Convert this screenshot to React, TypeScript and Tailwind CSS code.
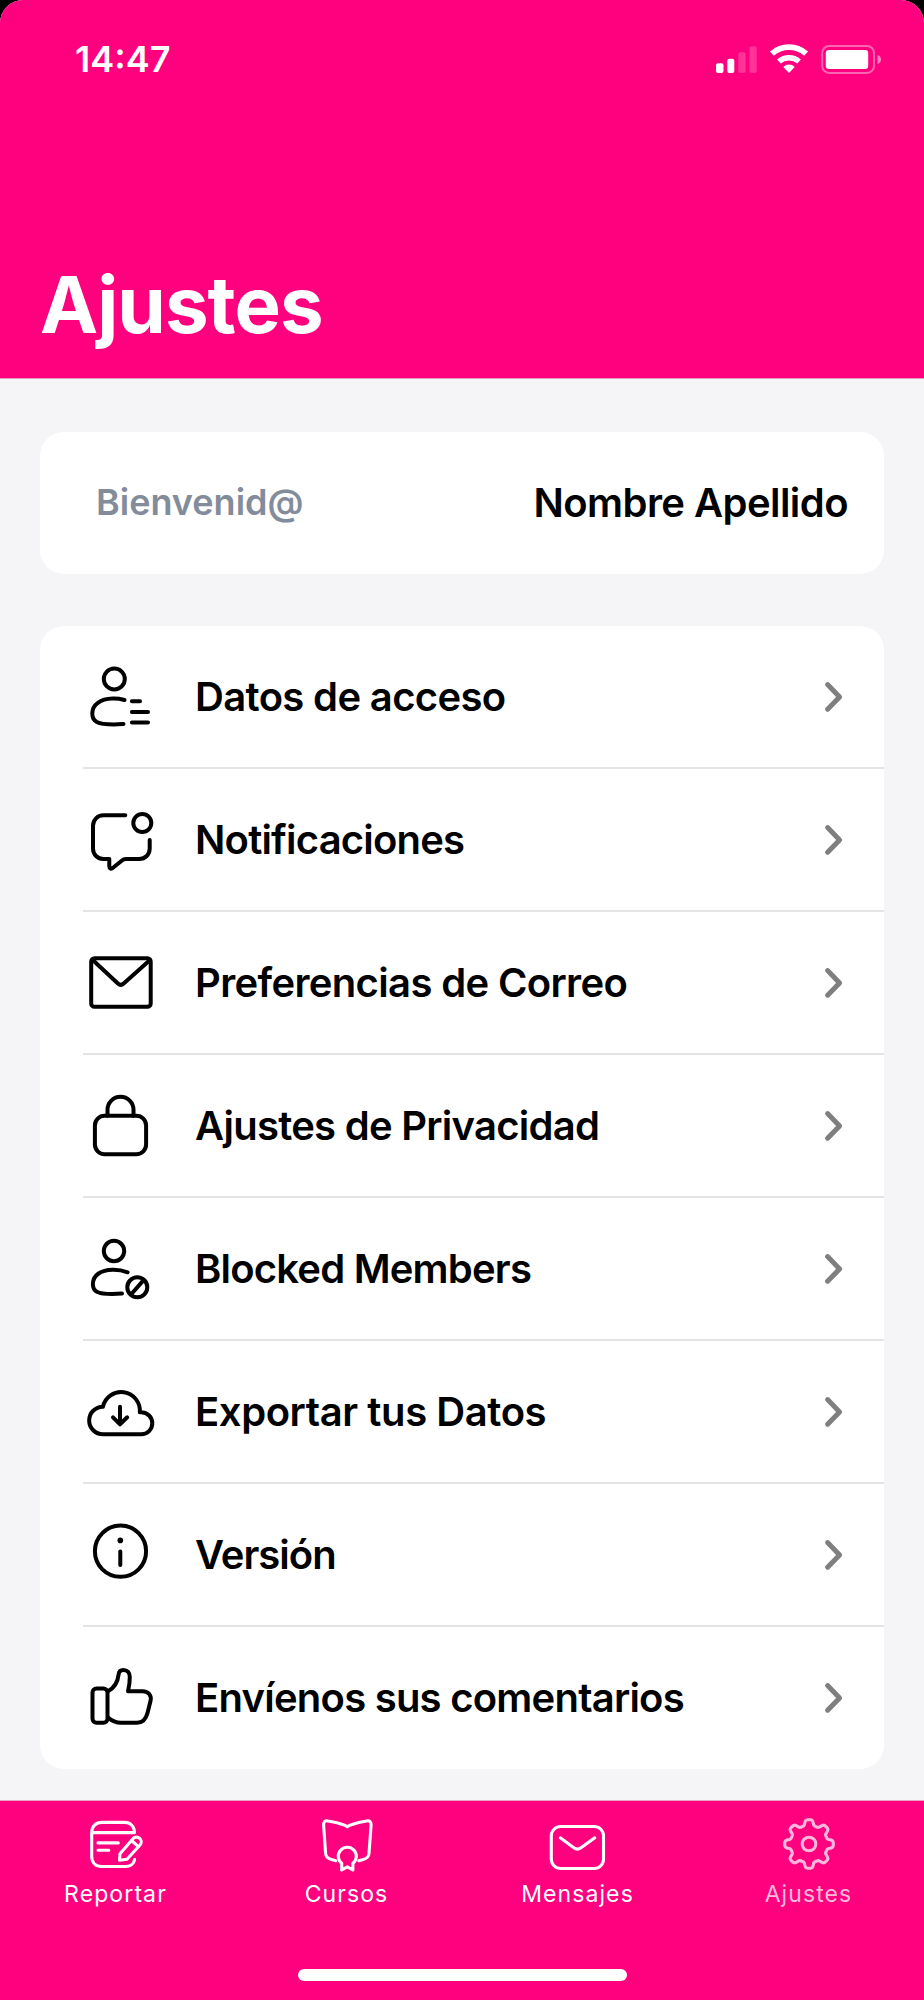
import type { ReactNode } from "react";

type Row = { label: string; tracking: string; icon: ReactNode };
type Tab = { label: string; active?: boolean; icon: ReactNode };

// Row icons are drawn in a box as high as the row itself
const rows: Row[] = [
  {
    label: "Datos de acceso",
    tracking: "tracking-[-0.65px]",
    icon: (
      <>
        <circle cx="31.3" cy="53" r="10.5" />
        <path d="M41.5 74C37 72.8 33 72.5 29.5 72.6C17.5 73 9.3 78.5 9.3 87.6C9.3 95.5 14 98.4 31 98.4C35 98.4 38 98.1 40.5 97.9" />
        <path d="M48.9 75.3H57M48.9 86H65M48.9 96.4H65" />
      </>
    ),
  },
  {
    label: "Notificaciones",
    tracking: "tracking-[-0.8px]",
    icon: (
      <>
        <path d="M42.3 46.3H20.5C14.5 46.3 10 50.8 10 56.8V79.5C10 85.5 14.5 90 20.5 90H26.3V97.3C26.3 99.8 28.3 100.3 30 98.8L39.3 91.3C40.3 90.4 41.3 90 42.8 90H56.2C62.2 90 66.7 85.5 66.7 79.5V71" />
        <circle cx="59.3" cy="54" r="9" />
      </>
    ),
  },
  {
    label: "Preferencias de Correo",
    tracking: "tracking-[-0.65px]",
    icon: (
      <>
        <rect x="8.2" y="46.2" width="59.5" height="48.6" rx="3.3" />
        <path d="M9.7 48L34.9 71.5C36.8 73.3 38.8 73.3 40.7 71.5L67 48" />
      </>
    ),
  },
  {
    label: "Ajustes de Privacidad",
    tracking: "tracking-[-0.72px]",
    icon: (
      <>
        <rect x="11.9" y="60.8" width="51.2" height="38.4" rx="9.6" />
        <path d="M24.5 60.8V54.8A13 13 0 0 1 50.5 54.8V60.8" />
      </>
    ),
  },
  {
    label: "Blocked Members",
    tracking: "tracking-[-0.8px]",
    icon: (
      <>
        <circle cx="31" cy="53" r="10.2" />
        <path d="M44.6 74.3C39.5 72.4 34.5 71.7 29.7 71.8C17.5 72.1 9.9 77.3 9.9 86C9.9 93.3 14 96 29 96C33 96 36.5 95.8 39 95.6" />
        <circle cx="54.3" cy="89.3" r="10" />
        <path d="M48.2 96.2L60.4 82.4" />
      </>
    ),
  },
  {
    label: "Exportar tus Datos",
    tracking: "tracking-[-0.42px]",
    icon: (
      <>
        <path d="M20 93.3A13.8 13.8 0 0 1 19.9 65.7A18.7 18.7 0 0 1 56.8 71.3H58.3A11 11 0 0 1 58.3 93.3Z" />
        <path d="M37 65.7V83.3M30 76.3L37 83.3L44.2 76.3" />
      </>
    ),
  },
  {
    label: "Versión",
    tracking: "tracking-[-1px]",
    icon: (
      <>
        <circle cx="37.5" cy="67.2" r="25.6" />
        <circle cx="37.3" cy="56.4" r="2.8" fill="#000" stroke="none" />
        <path d="M37.3 67.5V81" />
      </>
    ),
  },
  {
    label: "Envíenos sus comentarios",
    tracking: "tracking-[-0.76px]",
    icon: (
      <>
        <rect x="9.5" y="60.5" width="15" height="34.3" rx="4" />
        <path d="M25 63.3C31 60 34.8 54 35.6 46.5C35.9 43.5 37.3 41.9 40.3 41.9C44.5 41.9 46.8 44.8 46.8 49C46.8 54 46.2 58.5 45 63.2H59.5C65.5 63.2 68.8 67.5 67.5 73L64.5 85C62.8 91.5 60 94.8 54 94.8H38C32.5 94.8 29 93 25 89.5" />
      </>
    ),
  },
];

// Eight rounded teeth around (31, 30)
const gearPath =
  Array.from({ length: 192 }, (_, i) => {
    const a = (i / 192) * Math.PI * 2;
    const r = 21.5 + 2.8 * (Math.tanh(2.2 * Math.cos(8 * a)) / Math.tanh(2.2));
    return `${i === 0 ? "M" : "L"}${(31 + r * Math.cos(a)).toFixed(2)} ${(30 + r * Math.sin(a)).toFixed(2)}`;
  }).join("") + "Z";

const tabs: Tab[] = [
  {
    label: "Reportar",
    icon: (
      <>
        <path d="M49.5 18.6H6.7M49.5 18.6C49.5 12.5 45.5 8.4 39.5 8.4H17C10.8 8.4 6.7 12.5 6.7 18.6V42.5C6.7 48.6 10.8 52.5 17 52.5H40.5C45.5 52.5 49 49.8 49.6 45.5" />
        <path d="M13 28.9H33.3M13 36.3H23.8" />
        <path d="M34.5 46.3L35 39.7L48 24.7A4.7 4.7 0 0 1 55 31L42 45.2Z" />
        <path d="M46.6 26.5L53.3 32.6" />
      </>
    ),
  },
  {
    label: "Cursos",
    icon: (
      <>
        <path d="M19.8 46.7L15.5 45.5C11.5 44.5 9.8 43 9.6 39.5L7.6 11C7.4 7.8 9 6.3 12 7L16 7.8C22 9 27 10.3 31.3 12.6C35.6 10.3 40.6 9 46.6 7.8L50.6 7C53.6 6.3 55.3 7.8 55.1 11L53 39.5C52.8 43 51.1 44.5 47.1 45.5L42.8 46.7" />
        <path d="M25.7 56V49.3A9 9 0 1 1 36.9 49.3V56L31.3 52.8Z" />
      </>
    ),
  },
  {
    label: "Mensajes",
    icon: (
      <>
        <rect x="4.3" y="12.5" width="52.2" height="42" rx="9.3" />
        <path d="M13.3 23.8L26.8 33.7C29.3 35.6 31.5 35.6 34 33.7L47.8 23.8" />
      </>
    ),
  },
  {
    label: "Ajustes",
    active: true,
    icon: (
      <>
        <path d={gearPath} />
        <circle cx="31" cy="30" r="6.8" />
      </>
    ),
  },
];

function StatusIcons() {
  return (
    <svg width="166" height="30" viewBox="0 0 166 30" fill="#fff">
      <rect x="0" y="19.3" width="7.5" height="9.7" rx="2" />
      <rect x="11.3" y="14.7" width="7" height="14.3" rx="2" />
      <rect x="22.3" y="8.3" width="7.3" height="20.7" rx="2" opacity="0.2" />
      <rect x="33.3" y="2.3" width="7.5" height="26.7" rx="2" opacity="0.2" />
      <g transform="translate(53.3 0)">
        <path d="M2.6 9.7A25.8 25.8 0 0 1 36.8 9.7" fill="none" stroke="#fff" strokeWidth="5.8" />
        <path d="M9.6 17.5A15.3 15.3 0 0 1 29.8 17.5" fill="none" stroke="#fff" strokeWidth="5.5" />
        <path d="M19.7 29L14 22.9A8.2 8.2 0 0 1 25.4 22.9Z" />
      </g>
      <rect x="106.2" y="1.9" width="51.8" height="27" rx="7" fill="none" stroke="#fff" strokeOpacity="0.4" strokeWidth="2" />
      <rect x="109.8" y="6" width="42.4" height="19" rx="3" />
      <path d="M161.5 11C164 11.6 165 13.6 165 15.5C165 17.4 164 19.4 161.5 20Z" opacity="0.5" />
    </svg>
  );
}

function Chevron() {
  return (
    <svg className="mr-10 ml-auto" width="20" height="32" viewBox="0 0 20 32" fill="none" stroke="#7f7f7f" strokeWidth="5" strokeLinecap="round" strokeLinejoin="round">
      <path d="M3.6 3.6L15.6 15.9L3.6 28.2" />
    </svg>
  );
}

export default function App() {
  return (
    <div className="h-[2000px] w-[924px] overflow-hidden bg-black font-['Inter',sans-serif]">
      <div className="flex h-full flex-col overflow-hidden rounded-t-[23px] bg-[#f5f5f8] text-black">
        <header className="h-[379px] shrink-0 border-b border-[#e49abf] bg-[#ff007f] text-white">
          <div className="flex h-[118px] items-center justify-between pr-[42px] pl-[75px]">
            <span className="text-[36px] font-semibold">14:47</span>
            <StatusIcons />
          </div>
          <h1 className="pt-[140px] pl-10 text-[78px] leading-[94px] font-bold tracking-[-1px]">Ajustes</h1>
        </header>

        <section className="mx-10 mt-[53px] flex h-[142px] shrink-0 items-center justify-between rounded-3xl bg-white pr-9 pl-14">
          <span className="pb-[3px] text-[36px] font-semibold text-[#838c9b]">Bienvenid@</span>
          <span className="text-[40px] font-semibold tracking-[-0.55px]">Nombre Apellido</span>
        </section>

        <ul className="mx-10 mt-[52px] rounded-3xl bg-white pl-[43px]">
          {rows.map((row) => (
            <li key={row.label} className="flex h-[143px] items-center border-b-2 border-[#e4e4e5] last:h-[142px] last:border-b-0">
              <svg width="76" height="141" viewBox="0 0 76 141" fill="none" stroke="#000" strokeWidth="4" strokeLinecap="round" strokeLinejoin="round">
                {row.icon}
              </svg>
              <span className={`ml-9 text-[40px] font-semibold ${row.tracking}`}>{row.label}</span>
              <Chevron />
            </li>
          ))}
        </ul>

        <nav className="mt-auto flex h-[200px] shrink-0 flex-col border-t border-[#eba3c6] bg-[#ff007f] pt-[13px]">
          <div className="grid grid-cols-4">
            {tabs.map((tab) => (
              <a key={tab.label} className={`flex flex-col items-center ${tab.active ? "text-[#ffb8dc]" : "text-white"}`}>
                <svg width="61" height="60" viewBox="0 0 61 60" fill="none" stroke="currentColor" strokeWidth="3.1" strokeLinecap="round" strokeLinejoin="round">
                  {tab.icon}
                </svg>
                <span className="mt-1.5 text-[23px] leading-7 tracking-[1.1px]">{tab.label}</span>
              </a>
            ))}
          </div>
          <div className="mt-[61px] h-3 w-[329px] self-center rounded-full bg-white" />
        </nav>
      </div>
    </div>
  );
}
